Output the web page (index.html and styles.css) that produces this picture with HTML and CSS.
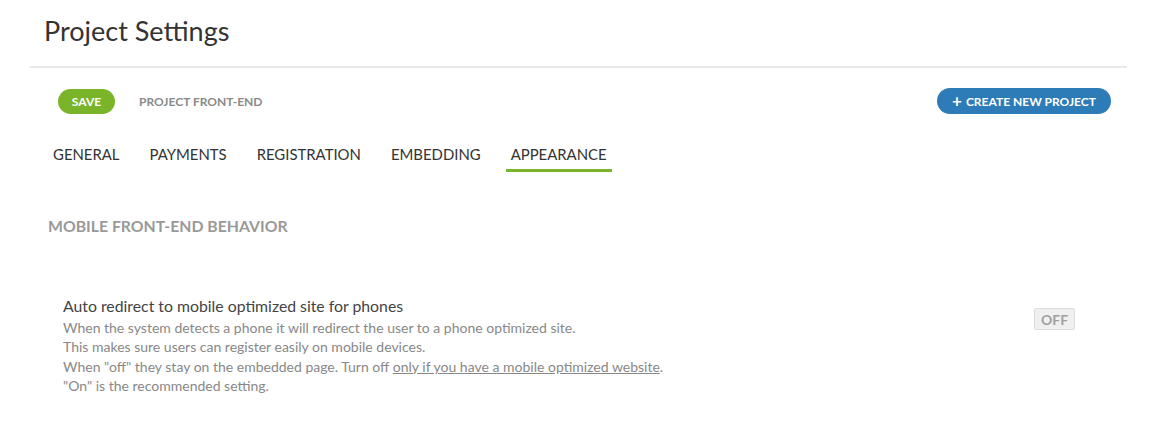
FILE: index.html
```html
<!DOCTYPE html>
<html>
<head>
<meta charset="utf-8">
<link rel="stylesheet" href="styles.css">
</head>
<body>
<div class="page">
  <header class="header">
    <h1 class="title">Project Settings</h1>
  </header>
  <div class="toolbar">
    <div class="toolbar-left">
      <button class="btn-save">SAVE</button>
      <span class="crumb">PROJECT FRONT-END</span>
    </div>
    <button class="btn-create"><span class="plus">+</span>CREATE NEW PROJECT</button>
  </div>
  <nav class="tabs">
    <a class="tab">GENERAL</a>
    <a class="tab">PAYMENTS</a>
    <a class="tab">REGISTRATION</a>
    <a class="tab">EMBEDDING</a>
    <a class="tab active">APPEARANCE</a>
  </nav>
  <h2 class="section-title">MOBILE FRONT-END BEHAVIOR</h2>
  <div class="setting">
    <div class="setting-text">
      <div class="setting-label">Auto redirect to mobile optimized site for phones</div>
      <div class="setting-desc">
        When the system detects a phone it will redirect the user to a phone optimized site.<br>
        This makes sure users can register easily on mobile devices.<br>
        When "off" they stay on the embedded page. Turn off <u>only if you have a mobile optimized website</u>.<br>
        "On" is the recommended setting.
      </div>
    </div>
    <div class="toggle">OFF</div>
  </div>
</div>
</body>
</html>
```

FILE: styles.css
```css
* { box-sizing: border-box; }
body {
  margin: 0;
  background: #fff;
  font-family: Lato, "Open Sans", sans-serif;
  color: #333;
}
.page {
  padding: 0 23px 0 30px;
}
.header {
  border-bottom: 2px solid #e8e8e8;
  padding: 14px 0 0 14px;
  height: 68px;
}
.title {
  margin: 0;
  font-size: 27px;
  font-weight: 400;
  color: #333;
  line-height: 34px;
}
.toolbar {
  display: flex;
  justify-content: space-between;
  align-items: center;
  padding: 20px 16px 0 28px;
}
.toolbar-left {
  display: flex;
  align-items: center;
  gap: 24px;
}
.btn-save {
  border: 0;
  background: #7ab529;
  color: #fff;
  font-family: inherit;
  font-weight: 700;
  font-size: 12px;
  height: 25px;
  width: 57px;
  border-radius: 13px;
  padding: 0;
}
.crumb {
  font-size: 12px;
  font-weight: 700;
  color: #8a8a8a;
}
.btn-create {
  border: 0;
  background: #2d7cb8;
  color: #fff;
  font-family: inherit;
  font-weight: 700;
  font-size: 12px;
  height: 26px;
  width: 174px;
  border-radius: 13px;
  padding: 0;
  display: flex;
  align-items: center;
  justify-content: center;
  gap: 4px;
}
.plus {
  font-size: 17px;
  line-height: 1;
  margin-top: -2px;
}
.tabs {
  display: flex;
  padding: 23px 0 0 18px;
}
.tab {
  font-size: 14.9px;
  color: #333;
  padding: 8px 5px 6px;
  margin-right: 20px;
  border-bottom: 3px solid transparent;
}
.tab.active {
  border-bottom-color: #7ab529;
}
.section-title {
  margin: 44px 0 0 18px;
  font-size: 15.8px;
  font-weight: 700;
  color: #999;
  line-height: 20px;
}
.setting {
  display: flex;
  justify-content: space-between;
  align-items: flex-start;
  padding: 60px 52px 0 33px;
}
.setting-label {
  font-size: 15.8px;
  color: #444;
  line-height: 20px;
}
.setting-desc {
  font-size: 14px;
  color: #888;
  line-height: 19.4px;
  margin-top: 2px;
}
.toggle {
  margin-top: 12px;
  width: 41px;
  height: 22px;
  background: #f0f0f0;
  border: 1px solid #ddd;
  border-radius: 2px;
  font-size: 14px;
  font-weight: 700;
  color: #a0a0a0;
  display: flex;
  align-items: center;
  justify-content: center;
}
```
